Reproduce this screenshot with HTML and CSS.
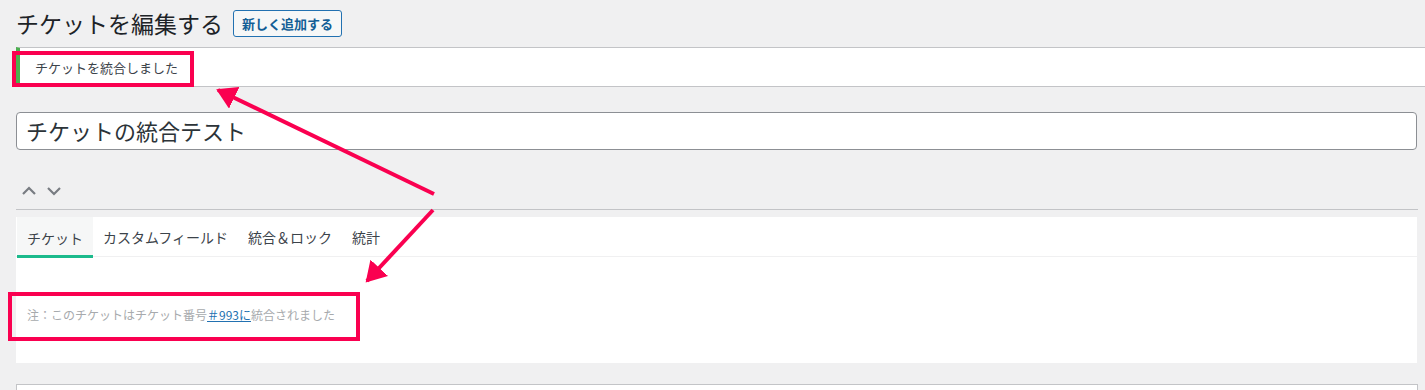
FILE: index.html
```html
<!DOCTYPE html>
<html lang="ja">
<head>
<meta charset="utf-8">
<title>チケットを編集する</title>
<link rel="stylesheet" href="styles.css">
</head>
<body>
<div class="wrap">
  <div class="heading">
    <h1 class="page-title">チケットを編集する</h1>
    <a class="title-action" href="#">新しく追加する</a>
  </div>
  <div class="notice"><p>チケットを統合しました</p></div>
  <div class="title-field">チケットの統合テスト</div>
  <div class="order-row">
    <svg class="chev" width="16" height="12" viewBox="0 0 16 12"><path d="M2 9 L8 3 L14 9" fill="none" stroke="#787c82" stroke-width="2.2"/></svg>
    <svg class="chev" width="16" height="12" viewBox="0 0 16 12"><path d="M2 3 L8 9 L14 3" fill="none" stroke="#787c82" stroke-width="2.2"/></svg>
  </div>
  <div class="panel">
    <div class="tabs">
      <span class="tab active">チケット</span>
      <span class="tab">カスタムフィールド</span>
      <span class="tab">統合＆ロック</span>
      <span class="tab">統計</span>
    </div>
    <div class="tab-body">
      <p class="note">注：このチケットはチケット番号<a href="#">＃993に</a>統合されました</p>
    </div>
  </div>
  <div class="next-box"></div>
</div>
<svg class="annot" width="1425" height="390" viewBox="0 0 1425 390">
  <defs>
    <marker id="ah" markerWidth="6" markerHeight="6" refX="4.5" refY="3" orient="auto" markerUnits="strokeWidth">
      <path d="M0 0 L5 3 L0 6 Z" fill="#fa0050"/>
    </marker>
  </defs>
  <rect x="14" y="53" width="178" height="32" fill="none" stroke="#fa0050" stroke-width="4"/>
  <rect x="10" y="294" width="348" height="45" fill="none" stroke="#fa0050" stroke-width="4"/>
  <line x1="434" y1="194" x2="218" y2="90" stroke="#fa0050" stroke-width="4" marker-end="url(#ah)"/>
  <line x1="433" y1="210" x2="367" y2="281" stroke="#fa0050" stroke-width="4" marker-end="url(#ah)"/>
</svg>
</body>
</html>
```

FILE: styles.css
```css
html, body {
  margin: 0;
  padding: 0;
  background: #f0f0f1;
  font-family: "Noto Sans CJK JP", "Noto Sans", sans-serif;
  color: #3c434a;
  overflow: hidden;
}
.wrap {
  padding: 10px 8px 0 16px;
}
.heading {
  display: flex;
  align-items: center;
  height: 27px;
  gap: 10px;
}
.page-title {
  margin: 0;
  font-size: 23px;
  font-weight: 400;
  line-height: 27px;
  color: #1d2327;
}
.title-action {
  display: inline-block;
  box-sizing: border-box;
  height: 27px;
  padding: 0 8px;
  border: 1px solid #2271b1;
  border-radius: 3px;
  background: #f6f7f7;
  color: #135e96;
  font-size: 13px;
  font-weight: 700;
  line-height: 25px;
  text-decoration: none;
}
.notice {
  margin: 10px -8px 0 0;
  box-sizing: border-box;
  height: 40px;
  background: #fff;
  border-top: 1px solid #c3c4c7;
  border-bottom: 1px solid #c3c4c7;
  border-left: 4px solid #4caf50;
  display: flex;
  align-items: center;
  padding-left: 15px;
}
.notice p {
  margin: 0;
  font-size: 13px;
  color: #3c434a;
}
.title-field {
  margin-top: 25px;
  box-sizing: border-box;
  height: 38px;
  background: #fff;
  border: 1px solid #8c8f94;
  border-radius: 4px;
  padding: 0 9px;
  font-size: 22px;
  line-height: 35px;
  color: #2c3338;
}
.order-row {
  display: flex;
  gap: 9px;
  height: 60px;
  box-sizing: border-box;
  padding: 35px 0 0 5px;
  border-bottom: 1px solid #c3c4c7;
  margin-right: -1px;
}
.chev {
  display: block;
}
.panel {
  margin-top: 7px;
  height: 146px;
  background: #fff;
  display: flex;
  flex-direction: column;
}
.tabs {
  display: flex;
  height: 40px;
  box-sizing: border-box;
  border-bottom: 1px solid #f0f0f1;
}
.tab {
  display: flex;
  align-items: center;
  padding: 0 10px;
  font-size: 14px;
  color: #3c434a;
  box-sizing: border-box;
  height: 40px;
}
.tab.active {
  margin-left: 1px;
  background: #f6f7f7;
  border-bottom: 3px solid #1cba8c;
  padding-top: 3px;
  height: 41px;
}
.tab-body {
  padding: 47px 11px 0;
}
.note {
  margin: 0;
  font-size: 12px;
  line-height: 22px;
  color: #a7aaad;
}
.note a {
  color: #2271b1;
  text-decoration: underline;
}
.next-box {
  margin-top: 21px;
  height: 20px;
  background: #fff;
  border: 1px solid #c3c4c7;
  margin-right: -1px;
}
.annot {
  position: absolute;
  left: 0;
  top: 0;
  pointer-events: none;
}
```
